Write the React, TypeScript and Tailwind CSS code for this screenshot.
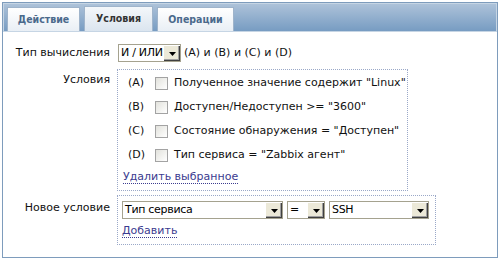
import React from "react";

const font = { fontFamily: '"DejaVu Sans", Verdana, sans-serif' };

const Arrow = () => (
  <span className="flex h-full w-[17px] shrink-0 items-center justify-center border-l border-t border-l-white border-t-white bg-[#ece9d8] shadow-[inset_-1px_-1px_0_#404040,inset_-2px_-2px_0_#a0a0a0]">
    <svg width="7" height="4" viewBox="0 0 7 4">
      <path d="M0 0h7L3.5 4z" fill="#000" />
    </svg>
  </span>
);

const Select = ({ value, w }: { value: string; w: string }) => (
  <div className={`flex h-[18px] items-stretch border border-[#a5a28f] bg-white ${w}`}>
    <span className="flex-1 overflow-hidden whitespace-nowrap pl-[2px] text-[11px] leading-[16px] tracking-[-0.3px] text-black">
      {value}
    </span>
    <Arrow />
  </div>
);

const Checkbox = () => (
  <span className="inline-block h-[13px] w-[13px] border border-[#a3a3a3] bg-gradient-to-br from-[#e2e2dc] to-white" />
);

const conditions = [
  { id: "A", text: 'Полученное значение содержит "Linux"' },
  { id: "B", text: 'Доступен/Недоступен >= "3600"' },
  { id: "C", text: 'Состояние обнаружения = "Доступен"' },
  { id: "D", text: 'Тип сервиса = "Zabbix агент"' },
];

const tabFont = { fontFamily: '"DejaVu Sans Condensed", "DejaVu Sans", sans-serif' };

const Tab = ({ label, w, active }: { label: string; w: string; active?: boolean }) => (
  <div
    style={tabFont}
    className={
      active
        ? `flex h-[25px] items-center justify-center border border-b-0 border-[#9fb4cb] bg-gradient-to-b from-[#f4f7fa] to-[#dbe5ef] text-[10.5px] font-bold text-[#333] ${w}`
        : `flex h-[24px] items-center justify-center border border-b-0 border-[#9fb4cb] bg-gradient-to-b from-white to-[#e9eff5] text-[10.5px] font-bold text-[#4b6a8c] ${w}`
    }
  >
    {label}
  </div>
);

export default function App() {
  return (
    <div className="h-[259px] w-[500px] bg-white pl-[2px] pt-[2px]" style={font}>
      <div className="flex h-[256px] w-[496px] flex-col border border-[#7e9cbc]">
        <div className="flex h-[29px] items-end gap-[4px] border border-[#c6d5e4] bg-gradient-to-b from-[#adc2d9] to-[#779cc2] pl-[3px]">
          <Tab label="Действие" w="w-[73px]" />
          <Tab label="Условия" w="w-[69px]" active />
          <Tab label="Операции" w="w-[77px]" />
        </div>

        <div className="flex flex-col pt-[12px] text-[11px] text-[#111]">
          <div className="flex items-center">
            <span className="w-[108px] pr-[1px] text-right">Тип вычисления</span>
            <div className="ml-[7px] flex items-center gap-[3px]">
              <Select value="И / ИЛИ" w="w-[63px]" />
              <span>(A) и (B) и (C) и (D)</span>
            </div>
          </div>

          <div className="mt-[7px] flex items-start">
            <span className="w-[108px] pr-[1px] pt-[3px] text-right">Условия</span>
            <div className="ml-[6px] flex w-[291px] flex-col border border-dotted border-[#9aa8c8] pb-[6px] pl-[5px] pt-[1px]">
              {conditions.map((c) => (
                <div key={c.id} className="flex h-[24px] items-center pl-[5px]">
                  <span className="w-[27px]">({c.id})</span>
                  <Checkbox />
                  <span className="ml-[6px]">{c.text}</span>
                </div>
              ))}
              <a className="mt-[3px] self-start border-b border-dotted border-[#3b3b8f] leading-[13px] text-[#3b3b8f]">
                Удалить выбранное
              </a>
            </div>
          </div>

          <div className="mt-[4px] flex items-start">
            <span className="w-[108px] pr-[1px] pt-[5px] text-right">Новое условие</span>
            <div className="ml-[6px] flex w-[319px] flex-col border border-dotted border-[#9aa8c8] pb-[6px] pl-[4px] pt-[5px]">
              <div className="flex items-center gap-[4px]">
                <Select value="Тип сервиса" w="w-[161px]" />
                <Select value="=" w="w-[38px]" />
                <Select value="SSH" w="w-[100px]" />
              </div>
              <a className="mt-[5px] self-start border-b border-dotted border-[#3b3b8f] leading-[13px] text-[#3b3b8f]">
                Добавить
              </a>
            </div>
          </div>
        </div>
      </div>
    </div>
  );
}
